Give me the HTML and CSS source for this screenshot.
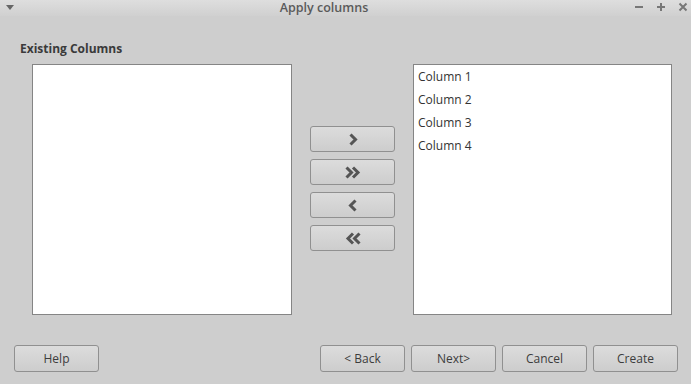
FILE: index.html
```html
<!DOCTYPE html>
<html>
<head>
<meta charset="utf-8">
<link rel="stylesheet" href="styles.css">
</head>
<body>
<div class="window">
  <div class="titlebar">
    <div class="tb-left">
      <svg width="8" height="5" viewBox="0 0 8 5"><path d="M0 0 L8 0 L4 5 Z" fill="#666"/></svg>
    </div>
    <div class="tb-title">Apply columns</div>
    <div class="tb-controls">
      <svg width="10" height="10" viewBox="0 0 10 10"><path d="M1 5 H9" stroke="#777" stroke-width="2"/></svg>
      <svg width="10" height="10" viewBox="0 0 10 10"><path d="M1 5 H9 M5 1 V9" stroke="#777" stroke-width="2"/></svg>
      <svg width="10" height="10" viewBox="0 0 10 10"><path d="M1.5 1.5 L8.5 8.5 M8.5 1.5 L1.5 8.5" stroke="#777" stroke-width="2"/></svg>
    </div>
  </div>
  <div class="content">
    <div class="label">Existing Columns</div>
    <div class="lists">
      <div class="listbox"></div>
      <div class="mid">
        <button class="btn mbtn"><svg width="12" height="13" viewBox="0 0 12 13"><path d="M3.5 1.5 L8.5 6.5 L3.5 11.5" fill="none" stroke="#555" stroke-width="3"/></svg></button>
        <button class="btn mbtn"><svg width="18" height="13" viewBox="0 0 18 13"><path d="M2.5 1.5 L7.5 6.5 L2.5 11.5 M9 1.5 L14 6.5 L9 11.5" fill="none" stroke="#555" stroke-width="3"/></svg></button>
        <button class="btn mbtn"><svg width="12" height="13" viewBox="0 0 12 13"><path d="M8.5 1.5 L3.5 6.5 L8.5 11.5" fill="none" stroke="#555" stroke-width="3"/></svg></button>
        <button class="btn mbtn"><svg width="18" height="13" viewBox="0 0 18 13"><path d="M9 1.5 L4 6.5 L9 11.5 M15.5 1.5 L10.5 6.5 L15.5 11.5" fill="none" stroke="#555" stroke-width="3"/></svg></button>
      </div>
      <div class="listbox">
        <div class="item">Column 1</div>
        <div class="item">Column 2</div>
        <div class="item">Column 3</div>
        <div class="item">Column 4</div>
      </div>
    </div>
  </div>
  <div class="footer">
    <button class="btn fbtn">Help</button>
    <div class="spacer"></div>
    <div class="fgroup">
      <button class="btn fbtn">&lt; Back</button>
      <button class="btn fbtn">Next&gt;</button>
      <button class="btn fbtn">Cancel</button>
      <button class="btn fbtn">Create</button>
    </div>
  </div>
</div>
</body>
</html>
```

FILE: styles.css
```css
* { box-sizing: border-box; }
html, body {
  margin: 0;
  padding: 0;
  width: 691px;
  height: 384px;
  overflow: hidden;
  background: #cecece;
  font-family: "Open Sans", "Noto Sans", sans-serif;
  color: #333;
}
.window {
  width: 691px;
  height: 384px;
  display: flex;
  flex-direction: column;
}
.titlebar {
  height: 16px;
  display: flex;
  align-items: flex-start;
  background: linear-gradient(#dedede, #d0d0d0);
}
.tb-left {
  width: 16px;
  height: 14px;
  display: flex;
  align-items: center;
  justify-content: center;
  padding-left: 4px;
}
.tb-title {
  flex: 1;
  text-align: center;
  font-size: 12.5px;
  font-weight: 600;
  color: #5a5a5a;
  line-height: 15px;
}
.tb-controls {
  width: 59px;
  height: 14px;
  display: flex;
  gap: 12px;
  align-items: center;
  padding-left: 2px;
}
.content {
  padding: 25px 20px 0 20px;
}
.label {
  font-size: 12px;
  font-weight: 700;
  line-height: 16px;
  color: #3a3a3a;
  height: 16px;
  margin-bottom: 7px;
}
.lists {
  display: grid;
  grid-template-columns: 260px 121px 259px;
  margin-left: 12px;
}
.listbox {
  height: 251px;
  background: #fff;
  border: 1px solid #858585;
  padding: 0 4px;
}
.item {
  font-size: 12px;
  line-height: 23px;
  color: #333;
}
.mid {
  display: flex;
  flex-direction: column;
  align-items: center;
  gap: 7px;
  padding-top: 62px;
}
.btn {
  border: 1px solid #909090;
  border-radius: 3px;
  background: linear-gradient(#dcdcdc, #cdcdcd);
  font-family: "Open Sans", "Noto Sans", sans-serif;
  font-size: 12px;
  color: #3c3c3c;
  padding: 0;
  display: flex;
  align-items: center;
  justify-content: center;
}
.mbtn {
  width: 85px;
  height: 26px;
}
.footer {
  display: flex;
  padding: 30px 13px 0 14px;
}
.spacer { flex: 1; }
.fgroup {
  display: flex;
  gap: 6px;
}
.fbtn {
  width: 85px;
  height: 27px;
}
```
